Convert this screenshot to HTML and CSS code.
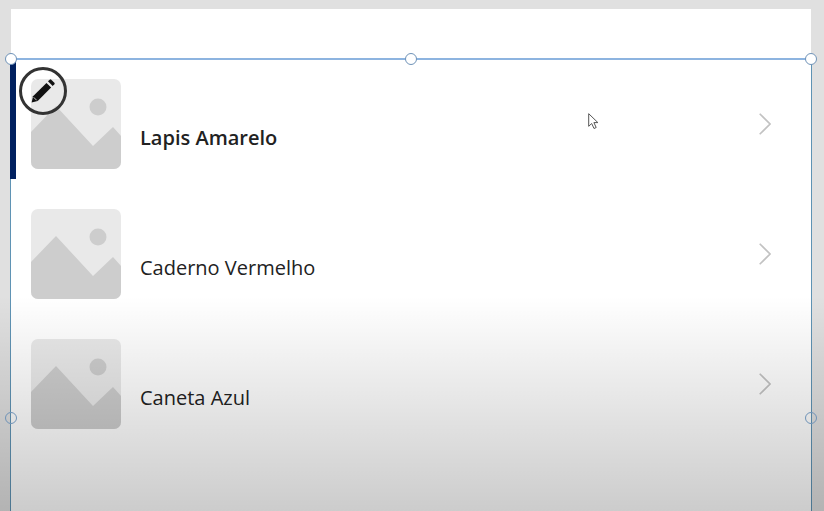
FILE: index.html
```html
<!DOCTYPE html>
<html lang="pt">
<head>
<meta charset="utf-8">
<title>Galeria</title>
<link rel="stylesheet" href="styles.css">
</head>
<body>
<main class="canvas">
  <section class="gallery">
    <span class="handle tl"></span><span class="handle tc"></span><span class="handle tr"></span>
    <span class="handle ml"></span><span class="handle mr"></span>
    <span class="marker"></span>
    <span class="edit">
      <svg viewBox="0 0 24 24" width="26" height="26"><path d="M1.500 22.500l1.300-5.600L15.200 4.500l4.300 4.300L7.100 21.200z" fill="#111"/><path d="M16.600 3.100l1.600-1.600a1 1 0 0 1 1.400 0l2.900 2.900a1 1 0 0 1 0 1.400l-1.600 1.600z" fill="#111"/><path d="M3.400 17.800l2.800 2.800" stroke="#fff" stroke-width=".7" fill="none"/></svg>
    </span>
    <article class="row">
      <svg class="thumb" viewBox="0 0 90 90"><use href="#ph"/></svg>
      <span class="name selected">Lapis Amarelo</span>
      <svg class="chev" viewBox="0 0 12 22"><path d="M.7.7L11 11 .7 21.300"/></svg>
    </article>
    <article class="row">
      <svg class="thumb" viewBox="0 0 90 90"><use href="#ph"/></svg>
      <span class="name">Caderno Vermelho</span>
      <svg class="chev" viewBox="0 0 12 22"><path d="M.7.7L11 11 .7 21.300"/></svg>
    </article>
    <article class="row">
      <svg class="thumb" viewBox="0 0 90 90"><use href="#ph"/></svg>
      <span class="name">Caneta Azul</span>
      <svg class="chev" viewBox="0 0 12 22"><path d="M.7.7L11 11 .7 21.300"/></svg>
    </article>
    <svg class="cursor" viewBox="0 0 11 17" width="11" height="17"><path d="M.7.7v12.600l3-2.800 2.300 5 2.200-1-2.300-4.900h4z" fill="#fff" stroke="#555" stroke-width="1"/></svg>
  </section>
</main>
<div class="shade"></div>
<svg class="defs" width="0" height="0">
  <defs>
    <g id="ph">
      <rect width="90" height="90" rx="7" fill="#e9e9e9"/>
      <circle cx="67" cy="28" r="8.500" fill="#cdcdcd"/>
      <path d="M0 53L25 27 62 67 82 48 90 57V83a7 7 0 0 1-7 7H7a7 7 0 0 1-7-7z" fill="#cdcdcd"/>
    </g>
  </defs>
</svg>
</body>
</html>
```
FILE: styles.css
```css
html, body {
  margin: 0;
  height: 100%;
  overflow: hidden;
}
body {
  background: #e0e0e0;
  font-family: "Open Sans", "Liberation Sans", sans-serif;
  color: #222;
}
.canvas {
  margin: 9px 13px 0 11px;
  height: 502px;
  background: #fff;
  padding-top: 49px;
  box-sizing: border-box;
}
.gallery {
  position: relative;
  height: 453px;
  border: 1px solid #5f93b4;
  border-top: 2px solid #8db4e0;
  border-bottom: 0;
  margin-right: -1px;
  margin-left: -1px;
  box-sizing: border-box;
}
.row {
  height: 130px;
  display: flex;
  align-items: flex-start;
  padding: 19px 40px 0 20px;
  box-sizing: border-box;
}
.thumb {
  width: 90px;
  height: 90px;
  flex: none;
}
.name {
  margin: 45px 0 0 19px;
  font-size: 20px;
  line-height: 27px;
  flex: 1;
}
.selected {
  font-weight: 600;
}
.chev {
  width: 12px;
  height: 22px;
  margin-top: 34px;
  fill: none;
  stroke: #c2c2c2;
  stroke-width: 1.6;
}
.marker {
  position: absolute;
  left: -1px;
  top: 0;
  width: 6px;
  height: 119px;
  background: #00205f;
}
.edit {
  position: absolute;
  left: 8px;
  top: 7px;
  width: 48px;
  height: 48px;
  border: 3px solid #333;
  border-radius: 50%;
  box-sizing: border-box;
  display: flex;
  align-items: center;
  justify-content: center;
}
.handle {
  position: absolute;
  width: 10px;
  height: 10px;
  border: 1px solid #6f93b8;
  border-radius: 50%;
  background: #fff;
  z-index: 2;
}
.tl { left: -6px; top: -7.5px; }
.tc { left: 394px; top: -7.5px; }
.tr { right: -6px; top: -7.5px; }
.ml { left: -6px; top: 352px; background: transparent; }
.mr { right: -6px; top: 352px; background: transparent; }
.cursor {
  position: absolute;
  left: 577px;
  top: 53px;
}
.shade {
  position: absolute;
  left: 0;
  right: 0;
  top: 296px;
  bottom: 0;
  background: linear-gradient(to bottom, rgba(0, 0, 0, 0), rgba(0, 0, 0, .2));
  pointer-events: none;
}
.defs {
  position: absolute;
}
```
